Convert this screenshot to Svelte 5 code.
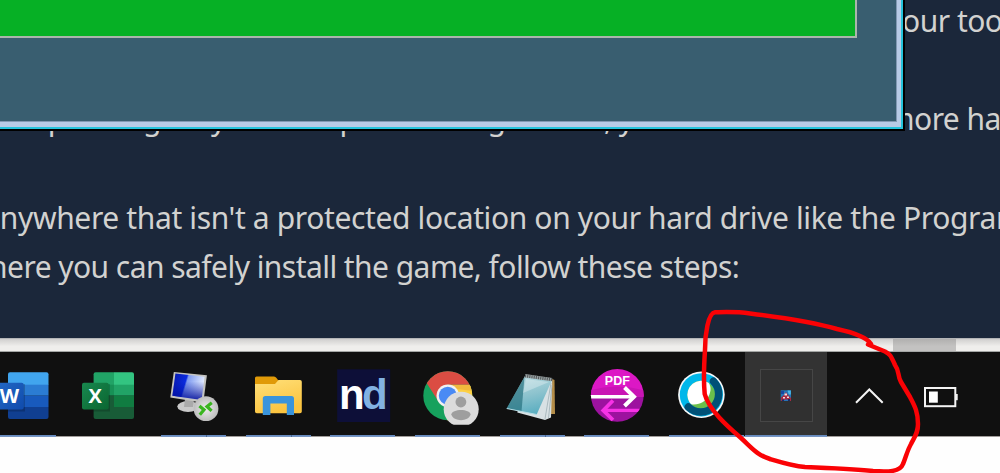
<script lang="ts">
  type App = {
    name: string;
    running?: boolean;
    grouped?: boolean;
    active?: boolean;
  };

  const lines = [
    { id: 'tools', text: 'our tools' },
    { id: 'gap-1', text: '' },
    { id: 'config', text: 'Depending on your computer configuration, you will need some more hard' },
    { id: 'gap-2', text: '' },
    { id: 'where', text: "anywhere that isn't a protected location on your hard drive like the Program" },
    { id: 'steps', text: 'where you can safely install the game, follow these steps:' }
  ];

  const apps: App[] = [
    { name: 'word', running: true },
    { name: 'excel' },
    { name: 'remote', running: true, grouped: true },
    { name: 'folder', running: true, grouped: true },
    { name: 'nd', running: true },
    { name: 'chrome', running: true },
    { name: 'notepad', running: true, grouped: true },
    { name: 'pdf', running: true },
    { name: 'webex', running: true },
    { name: 'game', running: true, active: true }
  ];
</script>

<div class="screen">
  <main class="article">
    {#each lines as line (line.id)}
      <p class="line {line.id}">{line.text}</p>
    {/each}
    <div class="dialog">
      <div class="progress"></div>
    </div>
  </main>

  <div class="scrollbar"><div class="thumb"></div></div>

  <footer class="taskbar">
    <nav class="apps">
      {#each apps as app (app.name)}
        <div class="app {app.name}" class:running={app.running} class:grouped={app.grouped} class:active={app.active}>
          <svg width="60" height="60" viewBox="0 0 60 60">
            {#if app.name === 'word'}
              <clipPath id="word-page"><rect x="14" y="8.3" width="40.5" height="46.7" rx="2" /></clipPath>
              <g clip-path="url(#word-page)">
                <rect x="14" y="8" width="41" height="13" fill="#41a5ee" />
                <rect x="14" y="20.7" width="41" height="11" fill="#2b7cd3" />
                <rect x="14" y="31.7" width="41" height="11.3" fill="#185abd" />
                <rect x="14" y="43" width="41" height="12" fill="#103f91" />
                <rect x="14" y="20" width="17" height="27.5" fill="#000" opacity=".2" />
              </g>
              <rect x="3" y="18.7" width="26.7" height="26.7" rx="2" fill="url(#word-badge)" />
              <linearGradient id="word-badge" x2="1" y2="1">
                <stop stop-color="#2368c4" /><stop offset="1" stop-color="#0f4bad" />
              </linearGradient>
              <text class="letter" x="15.4" y="38.8">W</text>
            {:else if app.name === 'excel'}
              <clipPath id="excel-page"><rect x="14.6" y="8.3" width="40.4" height="46.7" rx="2" /></clipPath>
              <g clip-path="url(#excel-page)">
                <rect x="14" y="8" width="21" height="13" fill="#21a366" />
                <rect x="35" y="8" width="21" height="13" fill="#33c481" />
                <rect x="14" y="20.7" width="21" height="11" fill="#179156" />
                <rect x="35" y="20.7" width="21" height="11" fill="#21a366" />
                <rect x="14" y="31.7" width="21" height="24" fill="#185c37" />
                <rect x="35" y="31.7" width="21" height="11.3" fill="#107c41" />
                <rect x="35" y="43" width="21" height="12" fill="#185c37" />
                <rect x="14" y="20" width="17" height="27.5" fill="#000" opacity=".18" />
              </g>
              <rect x="3" y="18.7" width="26.7" height="26.7" rx="2" fill="url(#excel-badge)" />
              <linearGradient id="excel-badge" x2="1" y2="1">
                <stop stop-color="#18884f" /><stop offset="1" stop-color="#0b6631" />
              </linearGradient>
              <text class="letter" x="16.2" y="38.8">X</text>
            {:else if app.name === 'remote'}
              <linearGradient id="remote-screen" x2="1" y2=".25">
                <stop stop-color="#0717a8" /><stop offset=".45" stop-color="#0a2be0" />
                <stop offset=".5" stop-color="#7f9bf0" /><stop offset="1" stop-color="#e2ebff" />
              </linearGradient>
              <linearGradient id="remote-shade" x2="0" y2="1">
                <stop offset=".3" stop-color="#0010a0" stop-opacity="0" /><stop offset="1" stop-color="#000c98" stop-opacity=".9" />
              </linearGradient>
              <radialGradient id="remote-ball"><stop stop-color="#eee" /><stop offset="1" stop-color="#bdbdbd" /></radialGradient>
              <ellipse cx="25" cy="42.5" rx="10.7" ry="5.4" fill="#c9c9c9" />
              <path d="M22 35h9l-1 8h-9z" fill="#aaa" />
              <path d="M10.8 8 43.9 11.3 40.3 38.8 7.3 33.4z" fill="#c4c4c0" />
              <path d="M12.4 9.6 41.6 12.8 38.6 36 9.4 31.7z" fill="url(#remote-screen)" />
              <path d="M12.4 9.6 41.6 12.8 38.6 36 9.4 31.7z" fill="url(#remote-shade)" />
              <circle cx="43" cy="44.7" r="12.4" fill="url(#remote-ball)" />
              <path d="M36.4 42 41 45.8 36.8 50.8M48.8 38.8 44 42.5 48.6 46.8" fill="none" stroke="#39b51f" stroke-width="3.2" />
            {:else if app.name === 'folder'}
              <linearGradient id="folder-body" x2=".4" y2="1">
                <stop stop-color="#ffe07a" /><stop offset="1" stop-color="#fbc440" />
              </linearGradient>
              <path d="M7 14q0-1.5 1.5-1.5H26q1.5 0 2.5 1.5l3 4V24H7z" fill="#e09a08" />
              <path d="M7 20h20l3.5-4H52q1.8 0 1.8 1.8V47.5q0 1.7-1.8 1.7H8.8Q7 49.2 7 47.5z" fill="url(#folder-body)" />
              <path d="M14.8 51V34.5Q14.8 32 17.3 32H43.5Q46 32 46 34.5V51H38.8V39.4H22.4V51z" fill="#3a94db" />
            {:else if app.name === 'nd'}
              <rect x="4.2" y="5.3" width="53" height="52.7" fill="#0d0f38" />
              <text class="brand" y="45.3"><tspan x="6" fill="#fff">n</tspan><tspan x="29" fill="#82b2e2">d</tspan></text>
            {:else if app.name === 'chrome'}
              <clipPath id="chrome-disc"><circle cx="30.8" cy="31.7" r="24.5" /></clipPath>
              <g clip-path="url(#chrome-disc)">
                <rect x="5" y="6" width="52" height="52" fill="#16a15d" />
                <path d="M30.8 20.7H60V60H28L40.3 37.2z" fill="#fdd043" />
                <path d="M9.3 18.5 0 0H60V20.7H30.8L21.3 37.2z" fill="#db4d43" />
                <path d="M30.8 20.7H56V27L40 25z" fill="#e9a93a" opacity=".6" />
              </g>
              <circle cx="30.8" cy="31.7" r="11.3" fill="#f1f1f1" />
              <circle cx="30.8" cy="31.7" r="9" fill="#4a8af4" />
              <clipPath id="chrome-user"><rect x="26" y="27" width="36" height="33.8" /></clipPath>
              <svg x="0" y="0" width="64" height="62" overflow="visible">
                <circle cx="44.2" cy="45.2" r="17.5" fill="#dcdcdc" clip-path="url(#chrome-user)" />
              </svg>
              <circle cx="43.9" cy="38" r="5.4" fill="#9e9e9e" />
              <path d="M34.3 50.5C35 44.5 53 44.5 53.6 50.5 51.5 58 36.5 58 34.3 50.5z" fill="#9e9e9e" />
            {:else if app.name === 'notepad'}
              <linearGradient id="pad-cover" x1=".3" y1="0" x2=".6" y2="1">
                <stop stop-color="#b7d9df" /><stop offset=".5" stop-color="#8dc3ce" /><stop offset="1" stop-color="#58adc0" />
              </linearGradient>
              <path d="M50.3 15 52.5 16 53 50 48 50z" fill="#b48d48" />
              <path d="M23 13 50.3 15.5 49 53.5 43 56 15.3 48.6z" fill="#d8e1e4" />
              <path d="M49 19 43 55M50 21 46.5 54" stroke="#97a9af" stroke-width=".7" />
              <path d="M23 12 50 16 34.7 50.5 4.7 44.5z" fill="url(#pad-cover)" />
              <path d="M22.5 13 19.5 47.3 4.7 44.3z" fill="#1f6b7a" opacity=".65" />
              <path d="M24 15 47 18 21 29z" fill="#fff" opacity=".3" />
              <path d="M4.7 44.5 34.7 50.5" stroke="#b4dce4" />
              <path d="M23 11.8 50 15.6" stroke="#9aa1a2" stroke-width="3.4" />
              <path d="M23 11.8 50 15.6" stroke="#4f5759" stroke-width="3" stroke-dasharray="1 1.2" />
            {:else if app.name === 'pdf'}
              <clipPath id="pdf-disc"><circle cx="30.3" cy="31.3" r="26.4" /></clipPath>
              <g clip-path="url(#pdf-disc)">
                <rect width="60" height="33" fill="#dc18c5" />
                <rect y="32.7" width="60" height="28" fill="#9d129f" />
                <path d="M0 27Q30 18 60 27V33H0z" fill="#c915b5" />
                <path d="M2 32.7H47" stroke="#fff" stroke-width="3.4" />
                <path d="M52.5 46.4H17" stroke="#f832e6" stroke-width="3.2" />
              </g>
              <path d="M37.5 23.5 47 32.7 37.5 42" fill="none" stroke="#fff" stroke-width="4" />
              <path d="M26 36.5 16.3 46.4 26 56" fill="none" stroke="#f832e6" stroke-width="3.8" />
              <text class="label" x="30.3" y="20.7">PDF</text>
            {:else if app.name === 'webex'}
              <circle cx="30.4" cy="30.8" r="23.3" fill="#f5f7f8" />
              <circle cx="30.4" cy="30.8" r="21.6" fill="#00b7ea" />
              <circle cx="30.4" cy="30.8" r="14" fill="#6abf4b" />
              <path d="M17 35A14 14 0 0 1 37.5 18.7C43.5 26 36 42.5 20 40.2Q18 38 17 35z" fill="#fff" />
              <path d="M42.5 17.3A18 18 0 0 1 17.3 43" fill="none" stroke="#005177" stroke-width="7.5" stroke-linecap="round" />
            {:else}
              <rect x="4.5" y="5.5" width="52" height="52" fill="#303030" stroke="#464646" />
              <rect x="24.7" y="26.3" width="10.3" height="10.7" fill="#2476b8" />
              <path d="M25 27h3v3h-3z" fill="#1547a0" />
              <path d="M31.5 26.5h3.3v4h-2z" fill="#49b9e8" />
              <path d="M25 33.5 28 31l2-3 2 3 3 3v3h-2l-3-2-3 2h-2z" fill="#a52a43" />
              <path d="M28.5 29.5h2.500v2h-2.500zM27 33h2v1.500h-2zM31 32.500h2V34h-2z" fill="#f1dcdc" />
              <path d="M26 35.500h2V37h-2zM32 35h2v2h-2z" fill="#172c68" />
            {/if}
          </svg>
        </div>
      {/each}
    </nav>

    <div class="tray">
      <svg width="30" height="20" viewBox="0 0 30 20">
        <path d="M2 15.800 15.300 2.500 28.700 15.800" fill="none" stroke="#f4f4f4" stroke-width="2" />
      </svg>
      <svg width="34" height="22" viewBox="0 0 34 22">
        <rect x="1" y="2" width="30.300" height="18.200" fill="none" stroke="#f4f4f4" stroke-width="2" />
        <rect x="5" y="5.500" width="8.800" height="11.200" fill="#fff" />
        <rect x="31.500" y="8" width="2.200" height="6.200" fill="#f4f4f4" />
      </svg>
    </div>
  </footer>

  <svg class="marker" width="1000" height="473" viewBox="0 0 1000 473">
    <path
      d="M871 344C866 336 851 332 837 329C809 321 778 317 750 313.500C736 311.500 727 312 715 312.300C708 313 705 335 705 350C704 365 703.500 382 704.700 394C709 410 727 426 741 438C752 448 757 455 770 459C780 462 793 466 805 467C830 468 853 469 873 471C888 472 900 472 903 464C906 457 907 451 911 444C915 436 918 433 918 424C918 411 914 405 910 397L901 382C897 375 900 372 895 365C891 356 890 354 885 351.500L868 344.500"
    />
  </svg>
</div>

<style>
  :global(body) {
    margin: 0;
    background: #fff;
  }

  .screen {
    position: relative;
    display: flex;
    flex-direction: column;
    width: 1000px;
    height: 473px;
    overflow: hidden;
    background: #fefefe;
  }

  .article {
    position: relative;
    height: 338px;
    overflow: hidden;
    background: #1b273a;
    color: #d2d2d0;
    font-family: 'Noto Sans', 'Open Sans', sans-serif;
    font-size: 30px;
    line-height: 49.2px;
  }

  .line {
    height: 49.2px;
    margin: 0;
    white-space: pre;
  }

  .tools {
    margin-top: -4px;
    padding-left: 902px;
    letter-spacing: -0.5px;
  }

  .config {
    margin-left: 10px;
    letter-spacing: -0.55px;
  }

  .where {
    margin-left: -16.6px;
    letter-spacing: -0.37px;
  }

  .steps {
    margin-left: -34px;
    letter-spacing: -0.55px;
  }

  .dialog {
    position: absolute;
    top: 0;
    left: 0;
    box-sizing: border-box;
    width: 905px;
    height: 131px;
    border: solid #000;
    border-width: 0 2px 2px 0;
    background: #395e70;
    box-shadow:
      inset -2px -2px #25c3dc,
      inset -6px -7px #b8cbe6,
      inset -7px -8px #8299b3;
  }

  .progress {
    width: 855px;
    height: 36px;
    border: solid #abb5ac;
    border-width: 0 2px 2px 0;
    background: #06b025;
  }

  .scrollbar {
    height: 14px;
    box-sizing: border-box;
    border-top: 1px solid #b4b5b7;
    border-bottom: 1px solid #a4a6a5;
    background: linear-gradient(#d0cfce, #efeeec 60%);
  }

  .thumb {
    width: 63px;
    height: 12px;
    margin-left: 893px;
    background: linear-gradient(#b1b0af, #c3c2c1 60%);
  }

  .taskbar {
    display: flex;
    height: 85px;
    background: #101010;
    box-shadow: inset 0 -1px #a19d9b;
  }

  .apps {
    display: flex;
    flex: none;
    margin-left: -18.4px;
  }

  .app {
    display: flex;
    flex: none;
    justify-content: center;
    box-sizing: border-box;
    width: 84.7px;
    padding-top: 12px;
  }

  .app svg {
    overflow: visible;
  }

  .running {
    background: linear-gradient(#5f86bd, #7e9bc6) center bottom / 65px 2px no-repeat;
  }

  .grouped {
    background:
      linear-gradient(#4c6a95, #4c6a95) 55px bottom / 1px 2px no-repeat,
      linear-gradient(#5f86bd, #7e9bc6) center bottom / 65px 2px no-repeat;
  }

  .word {
    background-position: right 10px bottom;
    background-size: 75px 2px;
  }

  .webex {
    background-position: right bottom;
    background-size: 75px 2px;
  }

  .active {
    width: 82px;
    margin-left: 1px;
    background:
      linear-gradient(#5f86bd, #7e9bc6) left bottom / 82px 2px no-repeat,
      #333;
  }

  .letter {
    fill: #fff;
    font: bold 20px 'Open Sans', sans-serif;
    text-anchor: middle;
  }

  .brand {
    font: bold 42px 'Liberation Sans', sans-serif;
  }

  .label {
    fill: #fff;
    font: bold 12.5px 'Liberation Sans', sans-serif;
    text-anchor: middle;
  }

  .tray {
    display: flex;
    align-items: center;
    gap: 40px;
    padding: 4px 0 0 27px;
  }

  .marker {
    position: absolute;
    inset: 0;
    pointer-events: none;
  }

  .marker path {
    fill: none;
    stroke: #fa0205;
    stroke-width: 4.5;
    stroke-linecap: round;
    stroke-linejoin: round;
  }
</style>
